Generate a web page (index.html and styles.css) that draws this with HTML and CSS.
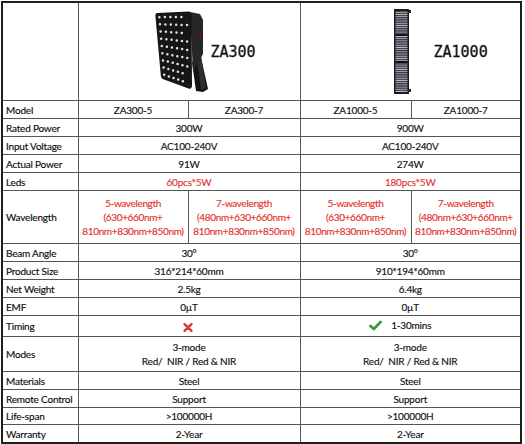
FILE: index.html
```html
<!DOCTYPE html>
<html>
<head>
<meta charset="utf-8">
<title>ZA300 / ZA1000 specification</title>
<link rel="stylesheet" href="styles.css">
</head>
<body>
<table class="spec">
  <colgroup>
    <col class="c-label"><col class="c-a"><col class="c-b"><col class="c-c"><col class="c-d">
  </colgroup>
  <tr class="r-head">
    <td class="label"></td>
    <td colspan="2" class="head">
      <div class="prod prod-300">
        <svg class="panel-300" width="56" height="83" viewBox="0 0 56 83" aria-hidden="true">
          <polygon points="39,52 47,43 55,79 50,82 43,81" fill="#141414"/>
          <polygon points="44,50 48,46 53,78 48,80" fill="#2e2e2e"/>
          <polygon points="37,2 47,4 50,10 50,44 40,62" fill="#262626"/>
          <rect x="46" y="22" width="2" height="4" fill="#6a1515"/>
          <path d="M4.5 3 L35.5 1.5 Q38.5 1.5 38.5 5 L39 75 Q39 79.5 35.5 78.5 L11 69.5 Q8 68.5 7.8 65.5 L2.4 6 Q2.2 3 4.5 3 Z" fill="#161616"/>
          <g stroke="#e4e4e4" stroke-width="2.5" stroke-linecap="round" stroke-dasharray="0 1" fill="none">
            <path pathLength="5" d="M6.4 7.2 L33.9 6.8"/>
            <path pathLength="5" d="M7 14.3 L34 15.1"/>
            <path pathLength="5" d="M7.6 21.5 L34.1 23.3"/>
            <path pathLength="5" d="M8.2 28.7 L34.1 31.6"/>
            <path pathLength="5" d="M8.8 36 L34.2 39.9"/>
            <path pathLength="5" d="M9.4 43.2 L34.3 48.1"/>
            <path pathLength="5" d="M10 50.4 L34.3 56.4"/>
            <path pathLength="5" d="M10.6 57.6 L34.4 64.6"/>
            <path pathLength="5" d="M11.2 64.8 L34.5 72.8"/>
          </g>
        </svg>
        <span class="prod-name">ZA300</span>
      </div>
    </td>
    <td colspan="2" class="head">
      <div class="prod prod-1000">
        <svg class="panel-1000" width="20" height="86" viewBox="0 0 20 86" aria-hidden="true">
          <defs>
            <pattern id="stripes" width="12" height="2.2" patternUnits="userSpaceOnUse">
              <rect width="12" height="2.2" fill="#1c1c22"/>
              <rect y="0.5" width="12" height="1.1" fill="#b4b8c6"/>
            </pattern>
          </defs>
          <rect x="2" y="0" width="15" height="85" fill="#1a1a1a"/>
          <rect x="3.5" y="2" width="12" height="81" fill="url(#stripes)"/>
          <rect x="3.5" y="25" width="12" height="2" fill="#101010"/>
          <rect x="3.5" y="52" width="12" height="2" fill="#101010"/>
          <rect x="17" y="1" width="2" height="3" fill="#2a2a2a"/>
          <rect x="17" y="80" width="2" height="3" fill="#2a2a2a"/>
        </svg>
        <span class="prod-name">ZA1000</span>
      </div>
    </td>
  </tr>
  <tr><td class="label">Model</td><td>ZA300-5</td><td>ZA300-7</td><td>ZA1000-5</td><td>ZA1000-7</td></tr>
  <tr><td class="label">Rated Power</td><td colspan="2">300W</td><td colspan="2">900W</td></tr>
  <tr><td class="label">Input Voltage</td><td colspan="2">AC100-240V</td><td colspan="2">AC100-240V</td></tr>
  <tr><td class="label">Actual Power</td><td colspan="2">91W</td><td colspan="2">274W</td></tr>
  <tr><td class="label">Leds</td><td colspan="2" class="red">60pcs*5W</td><td colspan="2" class="red">180pcs*5W</td></tr>
  <tr class="r-wave">
    <td class="label">Wavelength</td>
    <td class="red wave">5-wavelength<br>(630+660nm+<br>810nm+830nm+850nm)</td>
    <td class="red wave">7-wavelength<br>(480nm+630+660nm+<br>810nm+830nm+850nm)</td>
    <td class="red wave">5-wavelength<br>(630+660nm+<br>810nm+830nm+850nm)</td>
    <td class="red wave">7-wavelength<br>(480nm+630+660nm+<br>810nm+830nm+850nm)</td>
  </tr>
  <tr><td class="label">Beam Angle</td><td colspan="2">30°</td><td colspan="2">30°</td></tr>
  <tr><td class="label">Product Size</td><td colspan="2">316*214*60mm</td><td colspan="2">910*194*60mm</td></tr>
  <tr><td class="label">Net Weight</td><td colspan="2">2.5kg</td><td colspan="2">6.4kg</td></tr>
  <tr><td class="label">EMF</td><td colspan="2">0µT</td><td colspan="2">0µT</td></tr>
  <tr class="r-timing">
    <td class="label">Timing</td>
    <td colspan="2">
      <svg class="icon-cross" width="10" height="9" viewBox="0 0 10 9" aria-hidden="true">
        <path d="M1.5 1.2 L8.5 7.8 M8.5 1.2 L1.5 7.8" stroke="#d63c2a" stroke-width="2.4" stroke-linecap="round"/>
      </svg>
    </td>
    <td colspan="2" class="timing-yes">
      <span class="timing-wrap">
        <svg class="icon-check" width="13" height="11" viewBox="0 0 13 11" aria-hidden="true">
          <path d="M1.5 6 L4.8 9 L11.5 2" stroke="#3e9b3a" stroke-width="2.8" stroke-linecap="round" stroke-linejoin="round" fill="none"/>
        </svg>
        <span>1-30mins</span>
      </span>
    </td>
  </tr>
  <tr class="r-modes"><td class="label">Modes</td><td colspan="2">3-mode<br>Red/&nbsp; NIR / Red &amp; NIR</td><td colspan="2">3-mode<br>Red/&nbsp; NIR / Red &amp; NIR</td></tr>
  <tr><td class="label">Materials</td><td colspan="2">Steel</td><td colspan="2">Steel</td></tr>
  <tr><td class="label">Remote Control</td><td colspan="2">Support</td><td colspan="2">Support</td></tr>
  <tr class="r-short"><td class="label">Life-span</td><td colspan="2">&gt;100000H</td><td colspan="2">&gt;100000H</td></tr>
  <tr><td class="label">Warranty</td><td colspan="2">2-Year</td><td colspan="2">2-Year</td></tr>
</table>
</body>
</html>
```

FILE: styles.css
```css
html, body {
  margin: 0;
  padding: 0;
  background: #ffffff;
}

body {
  padding: 1px 0 0 1px;
  font-family: Lato, "Open Sans", "Liberation Sans", sans-serif;
  font-size: 10px;
  letter-spacing: -0.2px;
  color: #111111;
  -webkit-text-stroke: 0.15px currentColor;
}

.spec {
  border-collapse: collapse;
  table-layout: fixed;
  width: 521px;
  border: 2px solid #1e1e1e;
}

.c-label { width: 76px; }
.c-a { width: 110px; }
.c-b { width: 112px; }
.c-c { width: 111px; }
.c-d { width: 110px; }

.spec td {
  border: 1px solid #555555;
  padding: 0;
  height: 17px;
  line-height: 14px;
  text-align: center;
  vertical-align: middle;
  white-space: nowrap;
}

.spec td.label {
  text-align: left;
  padding-left: 3px;
  color: #0d0d0d;
}

.spec td.red {
  color: #e5312d;
}

.spec td.wave {
  letter-spacing: -0.35px;
}

.r-head td { height: 97px; }
.r-wave td { height: 52px; }
.r-timing td { height: 20px; }
.r-modes td { height: 34px; }
.r-short td { height: 16px; }

.head {
  padding: 0;
}

.prod {
  display: flex;
  align-items: center;
}

.prod-300 {
  padding-left: 74px;
  gap: 2px;
}

.prod-1000 {
  padding-left: 91px;
  gap: 22px;
}

.panel-300,
.panel-1000 {
  display: block;
  flex: none;
}

.prod-name {
  font-family: "DejaVu Sans Mono", "Liberation Mono", monospace;
  font-size: 15px;
  color: #111111;
  letter-spacing: 0;
  -webkit-text-stroke: 0.3px currentColor;
}

.icon-cross {
  display: inline-block;
  vertical-align: middle;
  margin-left: -3px;
}

.spec td.timing-yes {
  padding-right: 20px;
}

.timing-wrap {
  display: inline-flex;
  align-items: center;
  gap: 9px;
}

.icon-check {
  display: block;
}
```
